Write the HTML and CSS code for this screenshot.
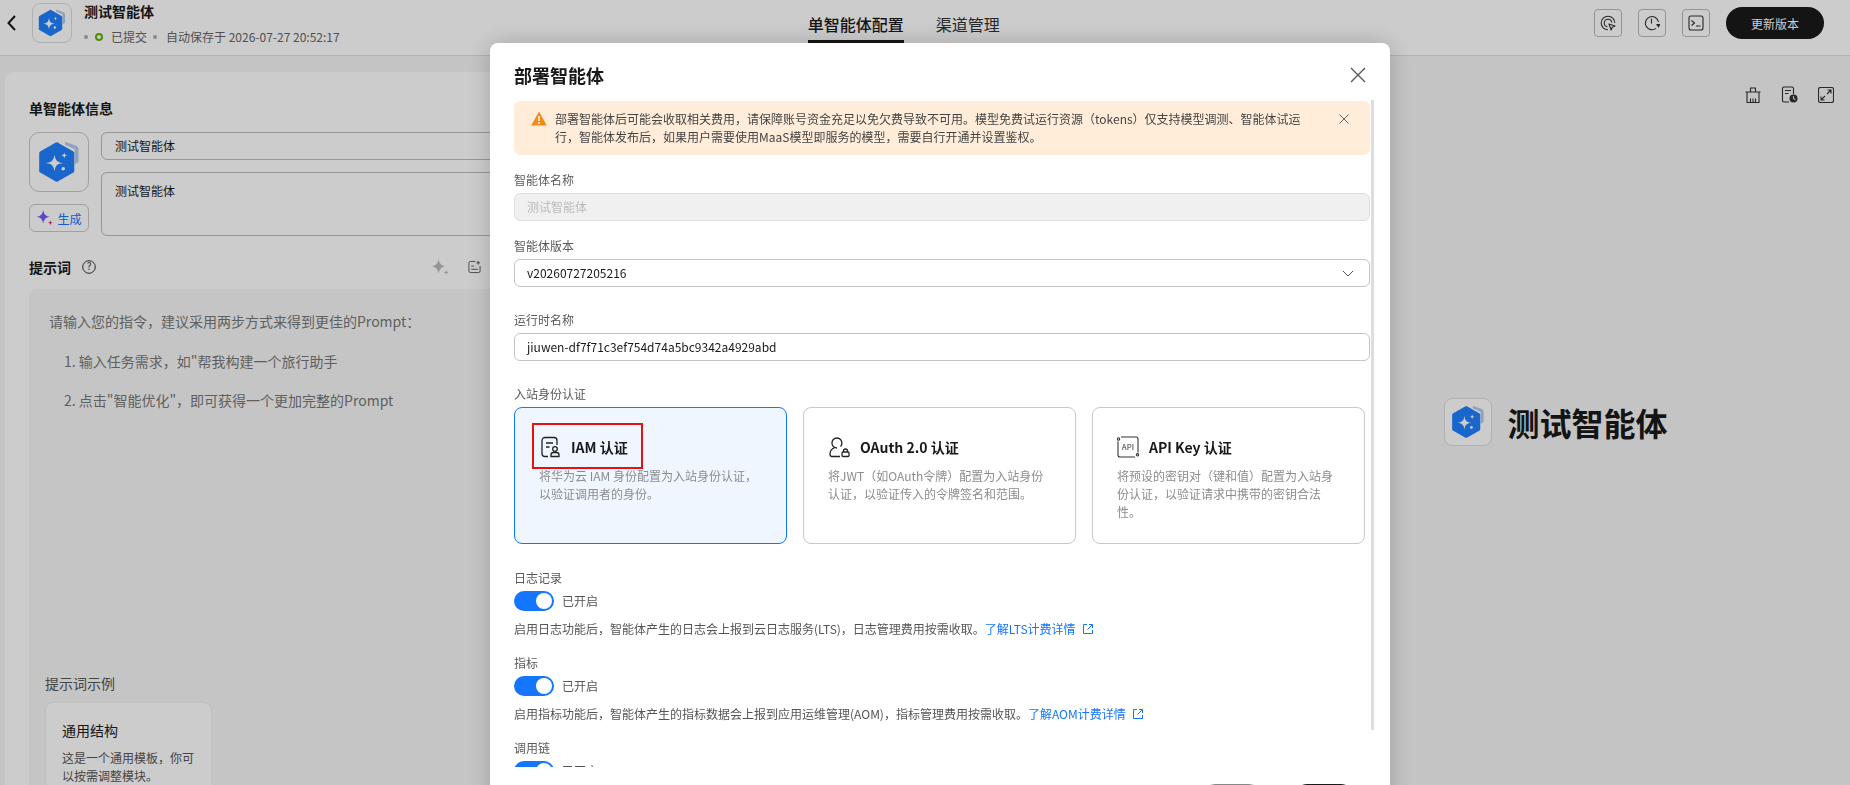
FILE: index.html
```html
<!doctype html>
<html lang="zh">
    <head>
        <meta charset="UTF-8" />
        <title>部署智能体</title>
        <link rel="stylesheet" href="styles.css">
    </head>
    <body>
        <svg class="defs" width="0" height="0">
            <defs>
                <linearGradient id="genGrad" x1="0" y1="0" x2="1" y2="1">
                    <stop offset="0" stop-color="#3f7bff"/>
                    <stop offset="1" stop-color="#a53cf0"/>
                </linearGradient>
            </defs>
            <symbol id="logo" viewBox="0 0 40 40">
                <path d="M24 6.500l7 2.500a2.500 2.500 0 0 1 2 2.500V20l-2.500 1.500V11.500L24 8.500z" fill="#b4cbf0"/>
                <path d="M18.500 8l10.500 6v12l-10.500 6L8 26V14z" fill="#2080ff" stroke="#2080ff" stroke-width="2.400" stroke-linejoin="round"/>
                <path d="M17 15c.6 4 1.700 5.100 5.700 5.700-4 .6-5.100 1.700-5.700 5.700-.6-4-1.700-5.100-5.700-5.700 4-.6 5.100-1.700 5.700-5.700z" fill="#fff"/>
                <path d="M23.500 13.500c.2 1.500.6 1.900 2 2.100-1.400.2-1.800.6-2 2.100-.2-1.500-.6-1.900-2-2.100 1.400-.2 1.800-.6 2-2.100z" fill="#fff"/>
                <circle cx="22.800" cy="24.500" r="1.200" fill="#fff"/>
            </symbol>
            <symbol id="spark" viewBox="0 0 20 20">
                <path d="M8 1c.9 5 2.700 6.800 7.500 7.700-4.800.9-6.600 2.700-7.500 7.700-.9-5-2.700-6.800-7.500-7.700C5.300 7.800 7.100 6 8 1z"/>
                <path d="M16 12.500c.3 1.700 1 2.400 2.800 2.800-1.800.4-2.500 1.100-2.800 2.800-.3-1.700-1-2.400-2.800-2.800 1.800-.4 2.500-1.100 2.800-2.800z"/>
            </symbol>
            <symbol id="external" viewBox="0 0 12 12">
                <path d="M5 1.500H1.500v9h9V7M7 1.500h3.500V5M10.500 1.500L5.500 6.500" fill="none" stroke="currentColor"/>
            </symbol>
        </svg>

        <header class="topbar">
            <svg class="back" width="12" height="18" viewBox="0 0 12 18"><path d="M9 2L2.500 9 9 16" fill="none" stroke="#191919" stroke-width="2"/></svg>
            <div class="logoBox logoSmall"><svg width="40" height="40"><use href="#logo"/></svg></div>
            <div class="agentMeta">
                <div class="agentName">测试智能体</div>
                <div class="agentStatus">
                    <span class="dot"></span>
                    <span class="ring"></span>
                    <span class="statusText">已提交</span>
                    <span class="dot dotGap"></span>
                    <span>自动保存于 2026-07-27 20:52:17</span>
                </div>
            </div>
            <nav class="tabs">
                <a class="tab tabActive">单智能体配置</a>
                <a class="tab">渠道管理</a>
            </nav>
            <div class="topActions">
                <button class="iconBtn">
                    <svg width="16" height="16" viewBox="0 0 16 16" fill="none" stroke="#333" stroke-width="1.100">
                        <path d="M8 14.800A6.800 6.800 0 1 1 14.800 8M7.500 11.800A3.800 3.800 0 1 1 11.800 7.500"/>
                        <path d="M9 9l6 2-2.700 1.200-1.200 2.800z" stroke-linejoin="round"/>
                    </svg>
                </button>
                <button class="iconBtn">
                    <svg width="16" height="16" viewBox="0 0 16 16" fill="none" stroke="#333" stroke-width="1.100">
                        <path d="M14.500 7A6.600 6.600 0 1 0 12 13.400M7.500 3.800V8.500"/>
                        <path d="M13 9.500h2.800l-1.400 2.200z" fill="#333"/>
                    </svg>
                </button>
                <button class="iconBtn">
                    <svg width="16" height="16" viewBox="0 0 16 16" fill="none" stroke="#333" stroke-width="1.100">
                        <rect x="1" y="1" width="14" height="14" rx="2"/>
                        <path d="M3.500 5.500L6.500 8l-3 2.500M8 11h4.500"/>
                    </svg>
                </button>
                <button class="updateBtn">更新版本</button>
            </div>
        </header>

        <main class="workspace">
            <section class="panel">
                <h2 class="panelTitle">单智能体信息</h2>
                <div class="infoRow">
                    <div class="infoLeft">
                        <div class="logoBox logoLarge"><svg width="60" height="60"><use href="#logo"/></svg></div>
                        <button class="genBtn">
                            <svg width="18" height="18" viewBox="0 0 20 20" class="genIcon">
                                <path d="M8 1c.9 5 2.700 6.800 7.500 7.700-4.800.9-6.600 2.700-7.500 7.700-.9-5-2.700-6.800-7.500-7.700C5.300 7.800 7.100 6 8 1z" fill="url(#genGrad)"/>
                                <path d="M16 12.500c.3 1.700 1 2.400 2.800 2.800-1.800.4-2.500 1.100-2.800 2.800-.3-1.700-1-2.400-2.800-2.800 1.800-.4 2.500-1.100 2.800-2.800z" fill="#e8357a"/>
                            </svg>
                            生成
                        </button>
                    </div>
                    <div class="infoFields">
                        <div class="panelInput">测试智能体</div>
                        <div class="panelInput panelTextarea">测试智能体</div>
                    </div>
                </div>
                <div class="promptHead">
                    <span class="promptTitle">提示词</span>
                    <svg class="helpIcon" width="14" height="14" viewBox="0 0 14 14">
                        <circle cx="7" cy="7" r="6.300" fill="none" stroke="#333"/>
                        <text x="7" y="10.300" text-anchor="middle" class="helpMark">?</text>
                    </svg>
                    <svg class="promptSpark" width="19" height="19" viewBox="0 0 20 20"><use href="#spark"/></svg>
                    <svg class="promptNote" width="13" height="14" viewBox="0 0 14 14" fill="none" stroke="#555">
                        <path d="M8 1H2.500A1.500 1.500 0 0 0 1 2.500v9A1.500 1.500 0 0 0 2.500 13h9a1.500 1.500 0 0 0 1.500-1.500V6M3.500 6h3M3.500 9.500h7M11 .5v4M9 2.500h4"/>
                    </svg>
                </div>
                <div class="promptBox">
                    <p class="promptIntro">请输入您的指令，建议采用两步方式来得到更佳的Prompt：</p>
                    <p class="promptItem">1. 输入任务需求，如"帮我构建一个旅行助手</p>
                    <p class="promptItem">2. 点击"智能优化"，即可获得一个更加完整的Prompt</p>
                    <div class="exampleLabel">提示词示例</div>
                    <div class="exampleCard">
                        <div class="exampleTitle">通用结构</div>
                        <div class="exampleDesc">这是一个通用模板，你可以按需调整模块。</div>
                    </div>
                </div>
            </section>

            <section class="canvas">
                <div class="canvasTools">
                    <svg width="16" height="16" viewBox="0 0 16 16" fill="none" stroke="#333" stroke-width="1.100">
                        <path d="M.5 5h15M2 5v10.500h12V5M5.500 5V1h5v4M5.500 11.500v4M8 11.500v4M10.500 11.500v4"/>
                    </svg>
                    <svg width="17" height="17" viewBox="0 0 17 17" fill="none" stroke="#333" stroke-width="1.100">
                        <path d="M8 16H3a1.500 1.500 0 0 1-1.500-1.500v-12A1.500 1.500 0 0 1 3 1h8a1.500 1.500 0 0 1 1.500 1.500V8M4 4.500h6M4 7.500h3.500"/>
                        <circle cx="12.500" cy="12.500" r="4" fill="#333" stroke="none"/>
                        <path d="M12.500 10v2.500l1.800 1.200" stroke="#ddd"/>
                    </svg>
                    <svg width="16" height="16" viewBox="0 0 16 16" fill="none" stroke="#333" stroke-width="1.100">
                        <rect x=".5" y=".5" width="15" height="15" rx="2"/>
                        <path d="M9 7l4-4M9.500 3H13v3.500M7 9l-4 4M3 9.500V13h3.500"/>
                    </svg>
                </div>
                <div class="stage">
                    <div class="logoBox logoStage"><svg width="48" height="48"><use href="#logo"/></svg></div>
                    <div class="stageName">测试智能体</div>
                </div>
            </section>
        </main>

        <div class="mask">
            <div class="modal">
                <div class="modalHead">
                    <h1 class="modalTitle">部署智能体</h1>
                    <svg class="modalClose" width="16" height="16" viewBox="0 0 16 16"><path d="M1 1l14 14M15 1L1 15" stroke="#555" stroke-width="1.300"/></svg>
                </div>
                <div class="modalBody">
                    <div class="alert">
                        <svg class="alertIcon" width="16" height="15" viewBox="0 0 16 15">
                            <path d="M8 .5l7.800 14H.2z" fill="#f28a1a"/>
                            <path d="M8 5v5M8 11v2" stroke="#fff" stroke-width="1.400"/>
                        </svg>
                        <div class="alertText">部署智能体后可能会收取相关费用，请保障账号资金充足以免欠费导致不可用。模型免费试运行资源（tokens）仅支持模型调测、智能体试运行，智能体发布后，如果用户需要使用MaaS模型即服务的模型，需要自行开通并设置鉴权。</div>
                        <svg class="alertClose" width="10" height="10" viewBox="0 0 10 10"><path d="M.5.5l9 9M9.500.5l-9 9" stroke="#666"/></svg>
                    </div>

                    <label class="label firstLabel">智能体名称</label>
                    <div class="field fieldDisabled">测试智能体</div>

                    <label class="label">智能体版本</label>
                    <div class="field fieldSelect">
                        <span>v20260727205216</span>
                        <svg width="12" height="7" viewBox="0 0 12 7"><path d="M1 1l5 5 5-5" fill="none" stroke="#555"/></svg>
                    </div>

                    <label class="label labelWide">运行时名称</label>
                    <div class="field">jiuwen-df7f71c3ef754d74a5bc9342a4929abd</div>

                    <label class="label labelCards">入站身份认证</label>
                    <div class="authCards">
                        <div class="authCard authCardActive">
                            <div class="authHead">
                                <svg class="authIcon" width="22" height="22" viewBox="0 0 22 22" fill="none" stroke="#222" stroke-width="1.300">
                                    <path d="M9 20.500H6A3 3 0 0 1 3 17.500V4.500A3 3 0 0 1 6 1.500h9a3 3 0 0 1 3 3V9M7 7h7M7 11h3.500"/>
                                    <circle cx="16" cy="13" r="2.300"/>
                                    <path d="M12 20.500v-1.500a2.500 2.500 0 0 1 2.500-2.500h3A2.500 2.500 0 0 1 20 19v1.500z"/>
                                </svg>
                                <span class="authTitle">IAM 认证</span>
                            </div>
                            <div class="authDesc">将华为云 IAM 身份配置为入站身份认证，以验证调用者的身份。</div>
                            <div class="annotation"></div>
                        </div>
                        <div class="authCard">
                            <div class="authHead">
                                <svg class="authIcon" width="22" height="22" viewBox="0 0 22 22" fill="none" stroke="#222" stroke-width="1.300">
                                    <path d="M9 12a5 5 0 1 1 3.500-1.500M7 11.500C4 12.500 2 15 2 18c0 1.500.7 2.500 2 2.500h8"/>
                                    <path d="M15.500 16v-1a2 2 0 0 1 4 0v1"/>
                                    <rect x="14" y="16" width="7" height="4.500" rx="1"/>
                                </svg>
                                <span class="authTitle">OAuth 2.0 认证</span>
                            </div>
                            <div class="authDesc">将JWT（如OAuth令牌）配置为入站身份认证，以验证传入的令牌签名和范围。</div>
                        </div>
                        <div class="authCard">
                            <div class="authHead">
                                <svg class="authIcon" width="22" height="22" viewBox="0 0 22 22" fill="none" stroke="#333" stroke-width="1.100">
                                    <path d="M4 1h15a2 2 0 0 1 2 2v13.500M18 21H3a2 2 0 0 1-2-2V5.500"/>
                                    <circle cx="1.500" cy="3" r="1.200"/>
                                    <circle cx="20.500" cy="18.800" r="1.200"/>
                                    <text x="11" y="13.800" text-anchor="middle" class="apiMark">API</text>
                                </svg>
                                <span class="authTitle">API Key 认证</span>
                            </div>
                            <div class="authDesc">将预设的密钥对（键和值）配置为入站身份认证，以验证请求中携带的密钥合法性。</div>
                        </div>
                    </div>

                    <label class="label labelLog">日志记录</label>
                    <div class="switchRow"><span class="switch"></span><span>已开启</span></div>
                    <div class="hint">启用日志功能后，智能体产生的日志会上报到云日志服务(LTS)，日志管理费用按需收取。<a class="link">了解LTS计费详情<svg width="12" height="12"><use href="#external"/></svg></a></div>

                    <label class="label">指标</label>
                    <div class="switchRow"><span class="switch"></span><span>已开启</span></div>
                    <div class="hint">启用指标功能后，智能体产生的指标数据会上报到应用运维管理(AOM)，指标管理费用按需收取。<a class="link">了解AOM计费详情<svg width="12" height="12"><use href="#external"/></svg></a></div>

                    <label class="label">调用链</label>
                    <div class="switchRow"><span class="switch"></span><span>已开启</span></div>
                </div>
                <div class="scrollThumb"></div>
                <div class="modalFoot">
                    <button class="footBtn">取消</button>
                    <button class="footBtn footBtnPrimary">确定</button>
                </div>
            </div>
        </div>
    </body>
</html>
```

FILE: styles.css
```css
html,
body {
    margin: 0;
    height: 100%;
}
body {
    width: 1850px;
    height: 785px;
    overflow: hidden;
    background-color: #f5f5f5;
    color: #191919;
    font-family: "Noto Sans CJK SC", "Noto Sans", sans-serif;
    font-size: 12px;
    line-height: 18px;
}
button {
    font-family: inherit;
    cursor: pointer;
}
h1,
h2,
p {
    margin: 0;
}
.defs {
    display: block;
    position: absolute;
}

/* top bar */
.topbar {
    display: flex;
    align-items: flex-start;
    height: 55px;
    background-color: #fff;
    border-bottom: 1px solid #dfdfdf;
}
.back {
    margin: 14px 8px 0 6px;
    flex: none;
}
.logoBox {
    display: flex;
    align-items: center;
    justify-content: center;
    flex: none;
    box-sizing: border-box;
    border: 1px solid #dcdcdc;
    background-color: #fff;
    overflow: hidden;
}
.logoBox svg {
    flex: none;
}
.logoSmall {
    width: 40px;
    height: 40px;
    margin: 3px 0 0 6px;
    border-radius: 8px;
}
.agentMeta {
    margin: 1px 0 0 12px;
}
.agentName {
    font-size: 14px;
    line-height: 20px;
    font-weight: 700;
}
.agentStatus {
    display: flex;
    align-items: center;
    margin-top: 7px;
    color: #666;
}
.dot {
    width: 4px;
    height: 4px;
    border-radius: 50%;
    background-color: #aaa;
}
.dotGap {
    margin-right: 9px;
}
.ring {
    width: 4px;
    height: 4px;
    margin: 0 8px 0 7px;
    border: 2px solid #5cb300;
    border-radius: 50%;
}
.statusText {
    margin-right: 6px;
}
.tabs {
    display: flex;
    gap: 32px;
    margin-left: 468px;
}
.tab {
    height: 43px;
    box-sizing: border-box;
    padding-top: 13px;
    font-size: 16px;
    line-height: 22px;
    color: #333;
}
.tabActive {
    font-weight: 500;
    color: #191919;
    border-bottom: 3px solid #191919;
}
.topActions {
    display: flex;
    align-items: center;
    gap: 16px;
    margin: 7px 26px 0 auto;
}
.iconBtn {
    display: flex;
    align-items: center;
    justify-content: center;
    width: 28px;
    height: 28px;
    padding: 0;
    border: 1px solid #bbb;
    border-radius: 4px;
    background-color: #fff;
}
.updateBtn {
    width: 98px;
    height: 32px;
    padding: 0;
    border: none;
    border-radius: 16px;
    background-color: #191919;
    color: #fff;
    font-size: 12px;
}

/* workspace */
.workspace {
    display: flex;
    height: 729px;
}
.panel {
    width: 1257px;
    margin: 16px 0 0 5px;
    padding: 26px 0 0 24px;
    box-sizing: border-box;
    flex: none;
    border-radius: 8px 8px 0 0;
    background-color: #fff;
}
.panelTitle {
    font-size: 14px;
    line-height: 20px;
    font-weight: 700;
}
.infoRow {
    display: flex;
    gap: 12px;
    margin-top: 14px;
}
.infoLeft {
    display: flex;
    flex-direction: column;
    gap: 12px;
}
.logoLarge {
    width: 60px;
    height: 60px;
    border-color: #c8c8c8;
    border-radius: 10px;
}
.genBtn {
    display: flex;
    align-items: center;
    justify-content: center;
    gap: 3px;
    width: 60px;
    height: 28px;
    padding: 0;
    border: 1px solid #c8c8c8;
    border-radius: 6px;
    background-color: #fff;
    color: #1476ff;
    font-size: 12px;
}
.genIcon {
    flex: none;
}
.infoFields {
    display: flex;
    flex-direction: column;
    gap: 12px;
    width: 1100px;
}
.panelInput {
    height: 28px;
    padding: 4px 13px;
    box-sizing: border-box;
    border: 1px solid #bdbdbd;
    border-radius: 6px;
}
.panelTextarea {
    height: 64px;
    padding-top: 9px;
}
.promptHead {
    display: flex;
    align-items: center;
    height: 20px;
    margin-top: 21px;
    margin-bottom: 12px;
}
.promptTitle {
    font-size: 14px;
    font-weight: 700;
}
.helpIcon {
    margin-left: 11px;
}
.helpMark {
    font-size: 10px;
    fill: #333;
}
.promptSpark {
    margin-left: 335px;
    fill: #bbb;
}
.promptNote {
    margin-left: 18px;
}
.promptBox {
    height: 500px;
    padding: 21px 0 0 16px;
    border-radius: 8px;
    background-color: #f7f7f7;
    color: #777;
    font-size: 14px;
    line-height: 22px;
}
.promptIntro {
    padding-left: 4px;
}
.promptItem {
    padding-left: 19px;
    margin-top: 17.5px;
}
.exampleLabel {
    margin-top: 262px;
    line-height: 20px;
    color: #555;
}
.exampleCard {
    width: 167px;
    margin-top: 9px;
    padding: 17px 16px;
    box-sizing: border-box;
    border: 1px solid #f0f0f0;
    border-radius: 8px;
    background-color: #fff;
}
.exampleTitle {
    line-height: 20px;
    color: #191919;
}
.exampleDesc {
    margin-top: 9px;
    font-size: 12px;
    line-height: 18px;
    color: #555;
}
.canvas {
    flex: 1;
    display: flex;
    flex-direction: column;
}
.canvasTools {
    display: flex;
    justify-content: flex-end;
    align-items: center;
    gap: 20px;
    padding: 30px 16px 0 0;
}
.stage {
    flex: 1;
    display: flex;
    align-items: center;
    justify-content: center;
    gap: 15px;
    padding-bottom: 44px;
}
.logoStage {
    width: 48px;
    height: 48px;
    border-radius: 8px;
}
.stageName {
    font-size: 32px;
    line-height: 44px;
    font-weight: 700;
}

/* deploy dialog */
.mask {
    position: fixed;
    top: 0;
    left: 0;
    width: 100%;
    height: 100%;
    padding: 43px 0 0 490px;
    box-sizing: border-box;
    background-color: rgba(0, 0, 0, 0.2);
}
.modal {
    position: relative;
    width: 900px;
    border-radius: 8px 8px 0 0;
    background-color: #fff;
    box-shadow: 0 0 24px rgba(0, 0, 0, 0.2);
}
.modalHead {
    display: flex;
    align-items: center;
    justify-content: space-between;
    height: 58px;
    padding: 6px 24px 0 24px;
    box-sizing: border-box;
}
.modalTitle {
    font-size: 18px;
    line-height: 26px;
    font-weight: 700;
}
.modalBody {
    height: 666px;
    margin-right: 20px;
    padding-left: 24px;
    overflow: hidden;
}
.scrollThumb {
    position: absolute;
    top: 57px;
    left: 881px;
    width: 3px;
    height: 630px;
    background-color: #ddd;
}
.alert {
    display: flex;
    align-items: flex-start;
    height: 54px;
    padding: 9px 0 0 17px;
    box-sizing: border-box;
    border-radius: 6px;
    background-color: #ffedd9;
    color: #444;
}
.alertIcon {
    flex: none;
    margin: 1px 8px 0 0;
}
.alertText {
    width: 750px;
}
.alertClose {
    margin: 4px 0 0 34px;
    flex: none;
}
.label {
    display: block;
    margin: 16px 0 4px;
    color: #595959;
}
.labelWide {
    margin-top: 24px;
}
.labelCards {
    margin-top: 24px;
}
.labelLog {
    margin-top: 25px;
}
.field {
    display: flex;
    align-items: center;
    justify-content: space-between;
    height: 28px;
    padding: 0 15px 0 12px;
    box-sizing: border-box;
    border: 1px solid #c4c4c4;
    border-radius: 6px;
}
.fieldDisabled {
    border-color: #dfdfdf;
    background-color: #f0f0f0;
    color: #bbb;
}
.authCards {
    display: grid;
    grid-template-columns: repeat(3, 273px);
    gap: 16px;
}
.authCard {
    position: relative;
    height: 137px;
    padding: 28px 24px 0;
    box-sizing: border-box;
    border: 1px solid #c8c8c8;
    border-radius: 8px;
}
.authCardActive {
    border-color: #1476ff;
    background-color: #eff6ff;
}
.authHead {
    display: flex;
    align-items: center;
    gap: 10px;
    height: 22px;
}
.authIcon {
    flex: none;
}
.authTitle {
    font-size: 14px;
    font-weight: 700;
}
.apiMark {
    font-size: 8px;
    fill: #333;
    stroke: none;
}
.authDesc {
    margin-top: 9px;
    color: #8c8c8c;
}
.annotation {
    position: absolute;
    top: 15px;
    left: 17px;
    width: 111px;
    height: 46px;
    box-sizing: border-box;
    border: 2px solid #e81010;
}
.switchRow {
    display: flex;
    align-items: center;
    gap: 8px;
    height: 20px;
    color: #555;
}
.switch {
    display: flex;
    justify-content: flex-end;
    align-items: center;
    width: 40px;
    height: 20px;
    padding: 2px;
    box-sizing: border-box;
    border-radius: 10px;
    background-color: #1476ff;
}
.switch:before {
    content: "";
    width: 16px;
    height: 16px;
    border-radius: 50%;
    background-color: #fff;
}
.hint {
    margin-top: 9px;
    color: #555;
}
.link {
    color: #1476ff;
}
.link svg {
    margin-left: 6px;
    vertical-align: -1px;
}
.modalFoot {
    display: flex;
    justify-content: flex-end;
    gap: 26px;
    padding: 17px 33px 0 0;
}
.footBtn {
    width: 66px;
    height: 32px;
    padding: 0;
    border: 1px solid #888;
    border-radius: 16px;
    background-color: #fff;
    font-size: 12px;
}
.footBtnPrimary {
    border-color: #191919;
    background-color: #191919;
    color: #fff;
}
```
